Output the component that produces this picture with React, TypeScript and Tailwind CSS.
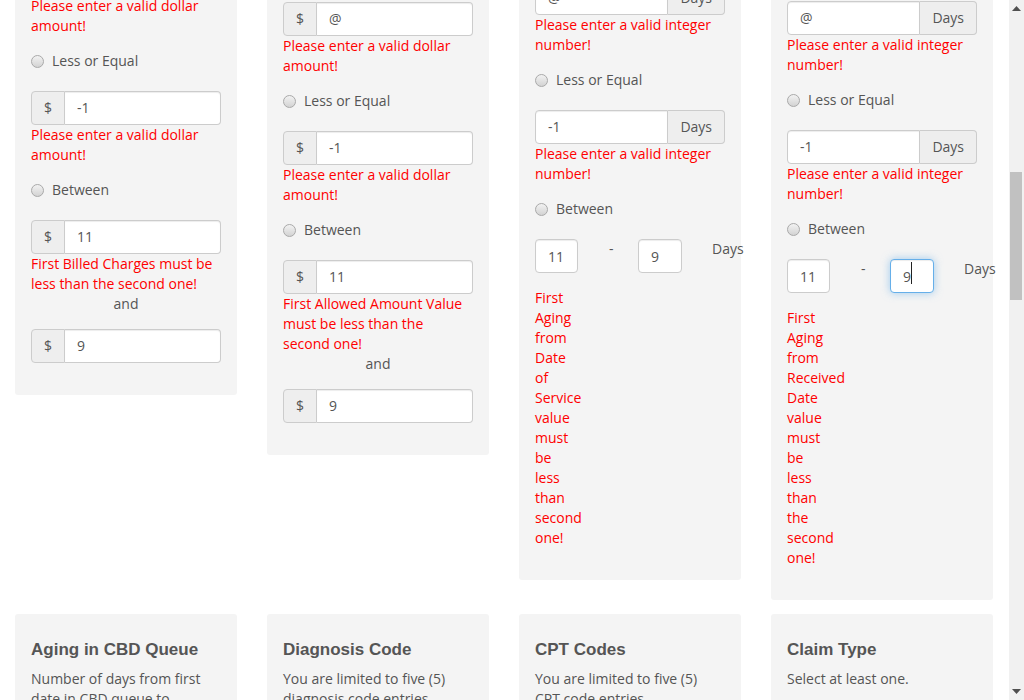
import { useCallback } from 'react';
import type { ReactNode } from 'react';

const ERR_DOLLAR = 'Please enter a valid dollar amount!';
const ERR_INT = 'Please enter a valid integer number!';

function Radio({ label }: { label: string }) {
  return (
    <label className="mt-[15px] mb-[20px] flex h-5 items-center gap-2 text-[#555]">
      <span className="h-[13px] w-[13px] shrink-0 rounded-full border border-[#a9a9a9] bg-linear-to-b from-[#f2f2f2] to-[#d3d3d3]" />
      {label}
    </label>
  );
}

function Err({ children }: { children: ReactNode }) {
  return <div className="text-[#ff0000]">{children}</div>;
}

function DollarInput({ value }: { value: string }) {
  return (
    <div className="flex h-[34px] w-full">
      <span className="flex w-[34px] shrink-0 items-center justify-center rounded-l-[4px] border border-[#ccc] bg-[#eee] text-[#555]">$</span>
      <input
        readOnly
        value={value}
        className="min-w-0 flex-1 rounded-r-[4px] border border-l-0 border-[#ccc] bg-white px-3 text-[#555] shadow-[inset_0_1px_1px_rgba(0,0,0,0.075)] outline-none"
      />
    </div>
  );
}

function DaysInput({ value }: { value: string }) {
  return (
    <div className="flex h-[34px] w-full">
      <input
        readOnly
        value={value}
        className="min-w-0 flex-1 rounded-l-[4px] border border-[#ccc] bg-white px-3 text-[#555] shadow-[inset_0_1px_1px_rgba(0,0,0,0.075)] outline-none"
      />
      <span className="flex shrink-0 items-center rounded-r-[4px] border border-l-0 border-[#ccc] bg-[#eee] px-3 text-[#555]">Days</span>
    </div>
  );
}

function Card({ title, desc, children }: { title: string[]; desc: string[]; children?: ReactNode }) {
  return (
    <div className="rounded-[3px] bg-[#f4f4f4] px-4 pt-[26px] pb-8">
      <h3 className="mb-[10px] font-['Liberation_Sans',Arial,sans-serif] text-[17px] leading-[19px] font-bold text-[#555]">
        {title.map((t) => (
          <span key={t} className="block">{t}</span>
        ))}
      </h3>
      {desc.map((d) => (
        <div key={d} className="whitespace-nowrap">{d}</div>
      ))}
      {children}
    </div>
  );
}

function BetweenDays({ err, focusSecond }: { err: string; focusSecond?: boolean }) {
  return (
    <div className="flex items-start">
      <div className="w-[43px] shrink-0">
        <input
          readOnly
          value="11"
          className="h-[34px] w-[43px] rounded-[4px] border border-[#ccc] bg-white px-3 text-[#555] shadow-[inset_0_1px_1px_rgba(0,0,0,0.075)] outline-none"
        />
        <div className="mt-[15px] text-[#ff0000]">{err}</div>
      </div>
      <div className="w-[60px] shrink-0 pl-[31px]">-</div>
      <div className="relative shrink-0">
        <input
          readOnly
          value="9"
          className={
            focusSecond
              ? 'h-[34px] w-[44px] rounded-[4px] border border-[#66afe9] bg-white px-3 text-[#555] shadow-[inset_0_1px_1px_rgba(0,0,0,0.075),0_0_8px_rgba(102,175,233,0.6)] outline-none'
              : 'h-[34px] w-[44px] rounded-[4px] border border-[#ccc] bg-white px-3 text-[#555] shadow-[inset_0_1px_1px_rgba(0,0,0,0.075)] outline-none'
          }
        />
        {focusSecond && <span className="absolute top-[3px] left-[21px] h-[22px] w-px bg-[#222]" />}
      </div>
      <div className="ml-[30px] shrink-0 whitespace-nowrap">Days</div>
    </div>
  );
}

// page scrollbar, as the browser drew it in the screenshot
function Scrollbar() {
  return (
    <div className="flex h-[700px] w-[15px] shrink-0 flex-col bg-[#f1f1f1]">
      <div className="flex h-[17px] items-center justify-center">
        <svg width="9" height="5" viewBox="0 0 9 5">
          <path d="M4.5 0 L9 5 L0 5 Z" fill="#505050" />
        </svg>
      </div>
      <div className="flex-1 pt-[155px]">
        <div className="ml-px h-[128px] w-[12px] bg-[#c1c1c1]" />
      </div>
      <div className="flex h-[17px] items-center justify-center">
        <svg width="9" height="5" viewBox="0 0 9 5">
          <path d="M0 0 L9 0 L4.5 5 Z" fill="#505050" />
        </svg>
      </div>
    </div>
  );
}

export default function App() {
  const setScroll = useCallback((el: HTMLDivElement | null) => {
    if (el) el.scrollTop = 848;
  }, []);

  return (
    <div className="flex h-[700px] bg-white font-['Open_Sans',sans-serif] text-[14px] leading-5 text-[#555]">
      <div ref={setScroll} className="h-[700px] w-[1009px] shrink-0 overflow-y-scroll [scrollbar-width:none]">
        <div className="h-[3642px] overflow-hidden">
          <header className="flex h-[660px] flex-col">
            <nav className="flex h-[50px] items-center justify-between bg-[#2c3e50] px-[15px] text-white">
              <span className="font-bold">Claims Portal</span>
              <span>Search</span>
            </nav>
            <div className="px-[15px] pt-10">
              <h1 className="font-['Liberation_Sans',Arial,sans-serif] text-[30px] font-bold text-[#444]">Advanced Claim Search</h1>
              <p className="mt-4 max-w-[700px]">
                Narrow down the list of claims by the criteria below. Fields that are left empty are ignored.
              </p>
            </div>
          </header>

          <div className="grid grid-cols-4 items-start gap-x-[30px] gap-y-[14px] pr-[16px] pl-[15px]">
            <Card title={['Billed Charges']} desc={['Total amount billed on the', 'claim.']}>
              <Radio label="Greater or Equal" />
              <DollarInput value="@" />
              <Err>{ERR_DOLLAR}</Err>
              <Radio label="Less or Equal" />
              <DollarInput value="-1" />
              <Err>{ERR_DOLLAR}</Err>
              <Radio label="Between" />
              <DollarInput value="11" />
              <Err>First Billed Charges must be less than the second one!</Err>
              <div className="text-center">and</div>
              <div className="mt-[15px]">
                <DollarInput value="9" />
              </div>
            </Card>

            <Card
              title={['Allowed Amount']}
              desc={['Amount allowed for the', 'claim after contractual', 'adjustments have been', 'applied.']}
            >
              <Radio label="Greater or Equal" />
              <DollarInput value="@" />
              <Err>{ERR_DOLLAR}</Err>
              <Radio label="Less or Equal" />
              <DollarInput value="-1" />
              <Err>{ERR_DOLLAR}</Err>
              <Radio label="Between" />
              <DollarInput value="11" />
              <Err>
                First Allowed Amount Value
                <br />
                must be less than the
                <br />
                second one!
              </Err>
              <div className="text-center">and</div>
              <div className="mt-[15px]">
                <DollarInput value="9" />
              </div>
            </Card>

            <Card title={['Aging from Date', 'of Service']} desc={['Number of days since the', 'date of service.']}>
              <Radio label="Greater or Equal" />
              <DaysInput value="@" />
              <Err>{ERR_INT}</Err>
              <Radio label="Less or Equal" />
              <DaysInput value="-1" />
              <Err>{ERR_INT}</Err>
              <Radio label="Between" />
              <BetweenDays err="First Aging from Date of Service value must be less than second one!" />
            </Card>

            <Card
              title={['Aging from', 'Received Date']}
              desc={['Number of days since the', 'claim was received by', 'the payer.']}
            >
              <Radio label="Greater or Equal" />
              <DaysInput value="@" />
              <Err>{ERR_INT}</Err>
              <Radio label="Less or Equal" />
              <DaysInput value="-1" />
              <Err>{ERR_INT}</Err>
              <Radio label="Between" />
              <BetweenDays err="First Aging from Received Date value must be less than the second one!" focusSecond />
            </Card>

            <div className="rounded-[3px] bg-[#f4f4f4] px-4 pt-[26px] pb-8">
              <h3 className="mb-[10px] font-['Liberation_Sans',Arial,sans-serif] text-[17px] leading-[19px] font-bold text-[#555]">Aging in CBD Queue</h3>
              <p>
                Number of days from first
                <br />
                date in CBD queue to
                <br />
                current date.
              </p>
              <Radio label="Greater or Equal" />
              <DaysInput value="" />
              <Radio label="Less or Equal" />
              <DaysInput value="" />
            </div>

            <div className="rounded-[3px] bg-[#f4f4f4] px-4 pt-[26px] pb-8">
              <h3 className="mb-[10px] font-['Liberation_Sans',Arial,sans-serif] text-[17px] leading-[19px] font-bold text-[#555]">Diagnosis Code</h3>
              <p>
                You are limited to five (5)
                <br />
                diagnosis code entries.
              </p>
              <input readOnly value="" className="mt-[15px] h-[34px] w-full rounded-[4px] border border-[#ccc] bg-white px-3 outline-none" />
            </div>

            <div className="rounded-[3px] bg-[#f4f4f4] px-4 pt-[26px] pb-8">
              <h3 className="mb-[10px] font-['Liberation_Sans',Arial,sans-serif] text-[17px] leading-[19px] font-bold text-[#555]">CPT Codes</h3>
              <p>
                You are limited to five (5)
                <br />
                CPT code entries.
              </p>
              <input readOnly value="" className="mt-[15px] h-[34px] w-full rounded-[4px] border border-[#ccc] bg-white px-3 outline-none" />
            </div>

            <div className="rounded-[3px] bg-[#f4f4f4] px-4 pt-[26px] pb-8">
              <h3 className="mb-[10px] font-['Liberation_Sans',Arial,sans-serif] text-[17px] leading-[19px] font-bold text-[#555]">Claim Type</h3>
              <p>Select at least one.</p>
              <Radio label="Professional" />
              <Radio label="Institutional" />
            </div>
          </div>
        </div>
      </div>
      <Scrollbar />
    </div>
  );
}
